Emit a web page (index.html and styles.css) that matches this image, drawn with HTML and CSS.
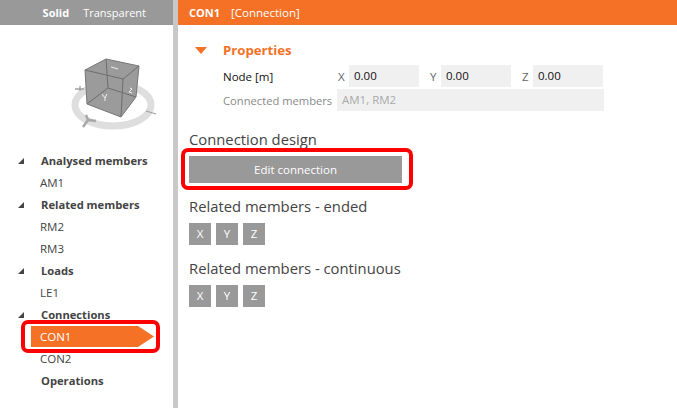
FILE: index.html
```html
<!DOCTYPE html>
<html>
<head>
<meta charset="utf-8">
<link rel="stylesheet" href="styles.css">
</head>
<body>
<div class="app">
  <aside class="side">
    <div class="side-head"><b>Solid</b><span>Transparent</span></div>
    <div class="cube-box">
      <svg class="cube" width="173" height="110" viewBox="0 25 173 110">
        <ellipse cx="113" cy="105" rx="38" ry="21" fill="none" stroke="#dedede" stroke-width="7"/>
        <path d="M75 89H84M80 86V91M146 111L156 114" stroke="#a0a0a0" stroke-width="1.3" fill="none"/>
        <path d="M83 127L88 120L86 115M88 120L96 121" stroke="#a8a8a8" stroke-width="2.5" fill="none"/>
        <path d="M85 70L106 59L139 66L136 97L121 117L87 104Z" fill="#9b9b9b"/>
        <path d="M85 70L123 79L139 66M123 79L121 117M106 59L108 88M87 104L108 88L136 97" fill="none" stroke="#6e6e6e" stroke-width="1"/>
        <path d="M85 70L106 59L139 66L136 97L121 117L87 104Z" fill="none" stroke="#777" stroke-width="1"/>
        <path d="M111 67L118 69M102 94L105 98L107 94M105 98V101M130 88L132 89L129 92L132 93" stroke="#eee" stroke-width="1" fill="none"/>
      </svg>
    </div>
    <ul class="tree">
      <li class="node"><i class="tri"></i>Analysed members</li>
      <li class="leaf">AM1</li>
      <li class="node"><i class="tri"></i>Related members</li>
      <li class="leaf">RM2</li>
      <li class="leaf">RM3</li>
      <li class="node"><i class="tri"></i>Loads</li>
      <li class="leaf">LE1</li>
      <li class="node"><i class="tri"></i>Connections</li>
      <li class="leaf active"><span class="active-bar">CON1</span><span class="mark mark-tree"></span></li>
      <li class="leaf">CON2</li>
      <li class="node">Operations</li>
    </ul>
  </aside>
  <div class="split"></div>
  <main class="main">
    <header class="main-head"><b>CON1</b><span>[Connection]</span></header>
    <section class="props">
      <h2 class="props-title"><i class="tri-down"></i>Properties</h2>
      <div class="row">
        <label class="row-label">Node [m]</label>
        <span class="axis">X</span><span class="field">0.00</span>
        <span class="axis">Y</span><span class="field">0.00</span>
        <span class="axis">Z</span><span class="field">0.00</span>
      </div>
      <div class="row">
        <label class="row-label muted">Connected members</label>
        <span class="field wide">AM1, RM2</span>
      </div>
    </section>
    <section class="design">
      <h3 class="design-title">Connection design</h3>
      <div class="edit-wrap"><button class="edit">Edit connection</button><span class="mark mark-edit"></span></div>
      <h3 class="design-title second">Related members - ended</h3>
      <div class="btns"><span class="sq">X</span><span class="sq">Y</span><span class="sq">Z</span></div>
      <h3 class="design-title third">Related members - continuous</h3>
      <div class="btns"><span class="sq">X</span><span class="sq">Y</span><span class="sq">Z</span></div>
    </section>
  </main>
</div>
</body>
</html>
```
FILE: styles.css
```css
* { box-sizing: border-box; }
html, body { margin: 0; padding: 0; }
body {
  width: 677px; height: 408px; overflow: hidden; background: #fff;
  font-family: "Open Sans", "Noto Sans", sans-serif; font-size: 11.5px; color: #444;
}
.app { display: flex; height: 408px; }
.side { width: 173px; flex: none; }
.side-head {
  height: 25px; background: #999; color: #fff; display: flex; align-items: center;
  justify-content: flex-end; gap: 14px; padding-right: 27px; font-size: 11px;
}
.cube-box { height: 125px; }
.cube { display: block; }
.tree { list-style: none; margin: 0; padding: 0; }
.tree li { height: 22px; line-height: 22px; position: relative; white-space: nowrap; }
.node { font-weight: 700; font-size: 11.2px; padding-left: 41px; }
.leaf { padding-left: 40px; }
.tri {
  position: absolute; left: 18px; top: 8px; width: 0; height: 0;
  border-left: 6px solid transparent; border-bottom: 6px solid #444;
}
.active { padding-left: 31px; }
.active-bar {
  display: block; width: 123px; height: 21px; line-height: 21px; padding-left: 9px;
  background: #f47126; color: #fff;
  clip-path: polygon(0 0, 87% 0, 100% 50%, 87% 100%, 0 100%);
}
.mark { position: absolute; border: 4px solid #f00; border-radius: 7px; pointer-events: none; }
.mark-tree { left: 21px; top: -6px; width: 139px; height: 33px; }
.split { width: 5px; flex: none; background: #c8c8c8; }
.main { flex: 1; min-width: 0; }
.main-head {
  height: 25px; background: #f47126; color: #fff; display: flex; align-items: center;
  gap: 11px; padding-left: 11px; font-size: 11.5px;
}
.main-head b { font-size: 11px; }
.props { padding: 15px 0 0 17px; }
.props-title {
  margin: 0 0 5px; height: 20px; line-height: 20px; font-size: 13.2px; font-weight: 700;
  color: #f47126; display: flex; align-items: center;
}
.tri-down {
  width: 0; height: 0; margin-right: 16px; border-left: 6px solid transparent;
  border-right: 6px solid transparent; border-top: 7px solid #f47126;
}
.row { display: flex; align-items: center; height: 22px; margin-bottom: 2px; padding-left: 28px; }
.row-label { width: 114px; color: #111; white-space: nowrap; }
.row-label.muted { color: #8a8a8a; font-size: 11.2px; }
.axis { width: 12px; padding-left: 1px; color: #666; }
.field {
  width: 70px; height: 22px; line-height: 22px; background: #f0f0f0; color: #111;
  padding-left: 5px; margin-right: 10px;
}
.field.wide { width: 267px; color: #aaa; margin: 0; }
.design { padding: 17px 0 0 11px; }
.design-title {
  margin: 0; font-weight: 400; font-size: 14.8px; height: 18px; line-height: 18px;
  color: #444; white-space: nowrap;
}
.second { margin-top: 14px; }
.third { margin-top: 14px; }
.edit-wrap { position: relative; width: 213px; height: 27px; margin: 8px 0 0; }
.edit {
  display: block; width: 213px; height: 27px; border: 0; padding: 0; background: #999; color: #fff;
  font: inherit;
}
.mark-edit { left: -8px; top: -8px; width: 232px; height: 42px; }
.btns { display: flex; gap: 5px; margin-top: 8px; }
.sq {
  width: 22px; height: 22px; line-height: 22px; text-align: center; background: #999; color: #fff;
}
```
